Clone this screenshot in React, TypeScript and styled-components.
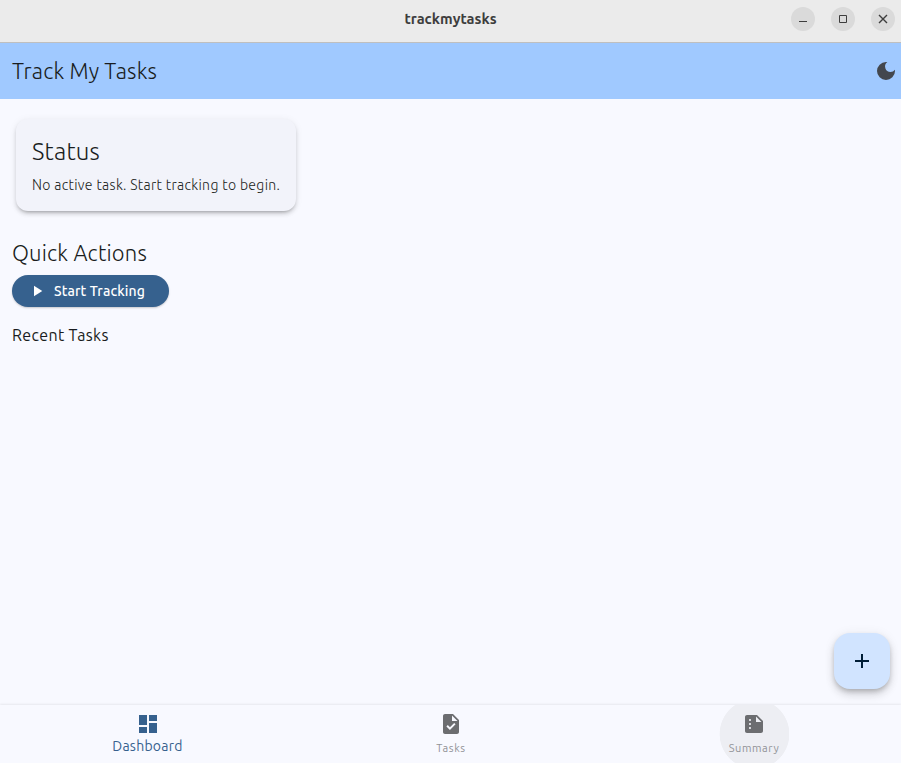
import React from 'react';
import styled, { createGlobalStyle } from 'styled-components';
import { MdAdd, MdDarkMode, MdDashboard, MdPlayArrow, MdSummarize, MdTask } from 'react-icons/md';

const GlobalStyle = createGlobalStyle`
  * { box-sizing: border-box; }
  body { margin: 0; overflow: hidden; }
  button { font: inherit; border: 0; padding: 0; background: none; }
  h1, h2, h3, p { margin: 0; }
  svg { display: block; flex: none; }
`;

const Window = styled.div`
  height: 100vh;
  display: flex;
  flex-direction: column;
  background: #f8f9ff;
  color: #191c20;
  font-family: Ubuntu, 'Noto Sans', sans-serif;
`;

const TitleBar = styled.header`
  flex: none;
  height: 43px;
  padding: 0 6px 4px;
  display: grid;
  grid-template-columns: 1fr auto 1fr;
  align-items: center;
  background: #ebebeb;
  border-bottom: 1px solid #bfbfbf;
`;

const WindowTitle = styled.div`
  grid-column: 2;
  color: #3d3d3d;
`;

const WindowControls = styled.div`
  justify-self: end;
  display: flex;
  gap: 16px;
`;

const ControlButton = styled.button`
  width: 24px;
  height: 24px;
  border-radius: 50%;
  background: #dadada;
  color: #3d3d3d;
`;

const AppBar = styled.div`
  flex: none;
  height: 56px;
  padding: 0 3px 0 12px;
  display: flex;
  align-items: center;
  justify-content: space-between;
  background: #a0c9ff;
`;

const ThemeButton = styled.button`
  color: #43474e;
`;

const Text = styled.div<{ $size: number; $line: number; $weight?: number; $spacing?: number }>`
  font-size: ${(p) => p.$size}px;
  line-height: ${(p) => p.$line}px;
  font-weight: ${(p) => p.$weight ?? 400};
  letter-spacing: ${(p) => p.$spacing ?? 0}px;
  white-space: nowrap;
`;

const Content = styled.main`
  flex: 1;
  min-height: 0;
  padding: 20px 12px 0;
  display: flex;
  flex-direction: column;
  align-items: flex-start;
`;

const Card = styled.section`
  width: 280px;
  height: 92px;
  margin: 0 4px 26px;
  padding: 17px 16px 15px;
  display: flex;
  flex-direction: column;
  gap: 7px;
  border-radius: 12px;
  background: #f2f3fa;
  box-shadow: 0 3px 3px -2px rgba(0, 0, 0, 0.2), 0 3px 4px rgba(0, 0, 0, 0.14), 0 1px 8px rgba(0, 0, 0, 0.06);
`;

const StartButton = styled.button`
  width: 157px;
  height: 32px;
  margin: 6px 0 16px;
  padding: 0 24px 0 16px;
  display: flex;
  align-items: center;
  gap: 8px;
  border-radius: 16px;
  background: #36618e;
  color: #fff;
  box-shadow: 0 1px 2px rgba(0, 0, 0, 0.2);
`;

const AddButton = styled.button`
  position: absolute;
  right: 11px;
  bottom: 74px;
  width: 56px;
  height: 56px;
  display: grid;
  place-items: center;
  border-radius: 16px;
  background: #d1e4ff;
  color: #001d36;
  box-shadow: 0 3px 5px -1px rgba(0, 0, 0, 0.2), 0 6px 10px rgba(0, 0, 0, 0.12), 0 1px 12px rgba(0, 0, 0, 0.07);
`;

const BottomNav = styled.nav`
  flex: none;
  height: 58px;
  display: grid;
  grid-template-columns: 295px 312px 294px;
  justify-items: center;
  background: #f8f9ff;
  box-shadow: 0 -1px 2px rgba(0, 0, 0, 0.07);
`;

const NavItem = styled.button<{ $active?: boolean; $hover?: boolean }>`
  width: 70px;
  height: 58px;
  padding-top: 7px;
  display: flex;
  flex-direction: column;
  align-items: center;
  color: ${(p) => (p.$active ? '#36618e' : '#6c6d70')};
  background: ${(p) => (p.$hover ? 'radial-gradient(circle at 35.5px 29px, #edeef3 34.5px, transparent 35.2px)' : 'none')};
`;

const NavLabel = styled(Text)<{ $active?: boolean }>`
  color: ${(p) => (p.$active ? '#36618e' : '#929397')};
`;

const tabs = [
  { label: 'Dashboard', Icon: MdDashboard, active: true, size: 14, line: 20, spacing: 0.25 },
  { label: 'Tasks', Icon: MdTask, size: 11, line: 24, spacing: 0.6 },
  { label: 'Summary', Icon: MdSummarize, hover: true, size: 11, line: 24, spacing: 0.6 },
];

export default function App() {
  return (
    <Window>
      <GlobalStyle />
      <TitleBar>
        <WindowTitle>
          <Text $size={14.67} $line={20} $weight={700}>trackmytasks</Text>
        </WindowTitle>
        <WindowControls>
          <ControlButton aria-label="Minimize">
            <svg width="24" height="24"><path d="M8 14.5h8" stroke="currentColor" /></svg>
          </ControlButton>
          <ControlButton aria-label="Maximize">
            <svg width="24" height="24"><path d="M8.5 8.5h7v7h-7z" fill="none" stroke="currentColor" /></svg>
          </ControlButton>
          <ControlButton aria-label="Close">
            <svg width="24" height="24"><path d="M8 8l8 8M16 8l-8 8" stroke="currentColor" strokeWidth="1.4" /></svg>
          </ControlButton>
        </WindowControls>
      </TitleBar>
      <AppBar>
        <Text as="h1" $size={22} $line={28} $weight={300} $spacing={0.16}>Track My Tasks</Text>
        <ThemeButton aria-label="Dark mode"><MdDarkMode size={24} /></ThemeButton>
      </AppBar>
      <Content>
        <Card>
          <Text as="h2" $size={24} $line={32} $weight={300} $spacing={0.2}>Status</Text>
          <Text as="p" $size={14} $line={20} $weight={300} $spacing={0.34}>No active task. Start tracking to begin.</Text>
        </Card>
        <Text as="h2" $size={22} $line={32} $weight={300} $spacing={0.16}>Quick Actions</Text>
        <StartButton>
          <MdPlayArrow size={18} />
          <Text $size={14} $line={20} $weight={500} $spacing={0.12}>Start Tracking</Text>
        </StartButton>
        <Text as="h3" $size={16} $line={24} $spacing={0.35}>Recent Tasks</Text>
      </Content>
      <BottomNav>
        {tabs.map(({ label, Icon, active, hover, size, line, spacing }) => (
          <NavItem key={label} $active={active} $hover={hover}>
            <Icon size={24} />
            <NavLabel $active={active} $size={size} $line={line} $spacing={spacing}>{label}</NavLabel>
          </NavItem>
        ))}
      </BottomNav>
      <AddButton aria-label="Add task"><MdAdd size={24} /></AddButton>
    </Window>
  );
}
